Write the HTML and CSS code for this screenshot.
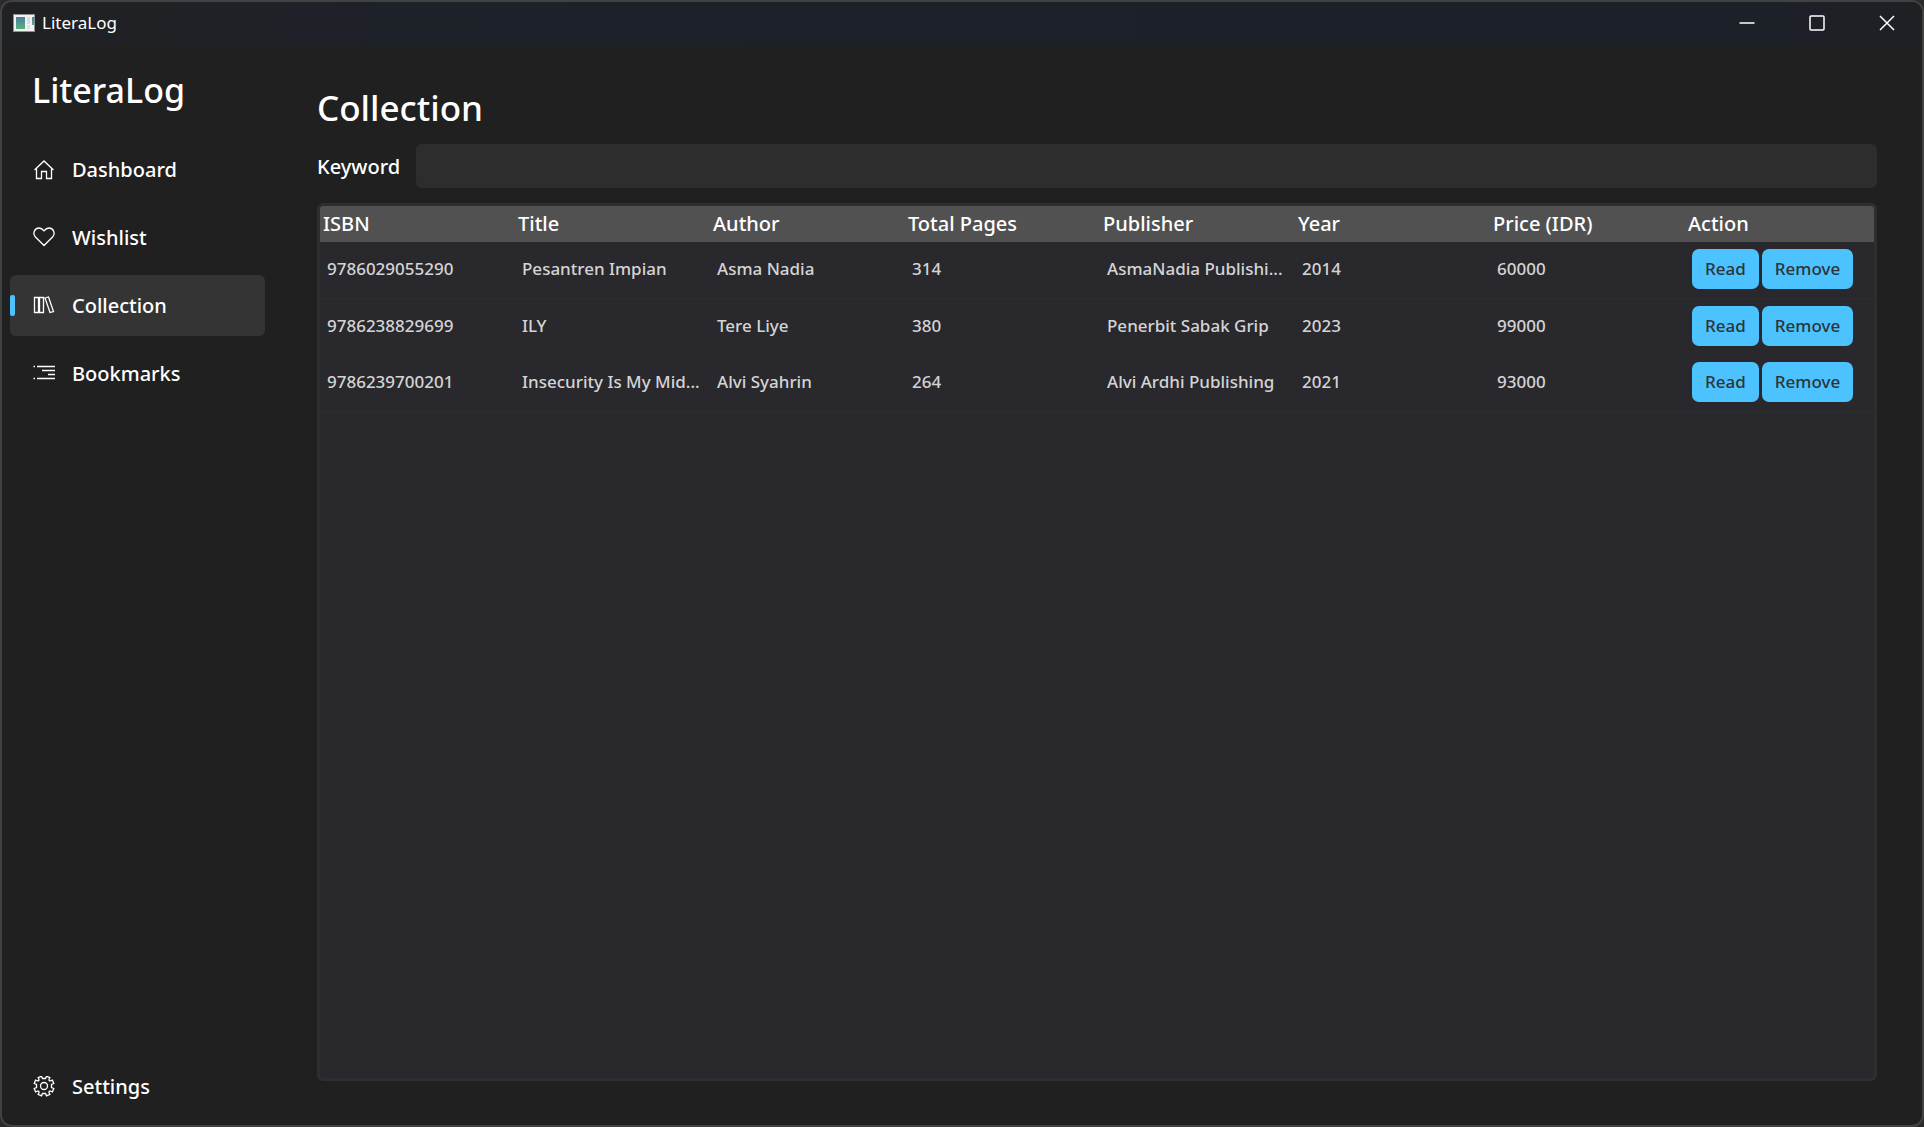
FILE: index.html
```html
<!DOCTYPE html>
<html lang="en">
<head>
<meta charset="utf-8">
<title>LiteraLog</title>
<link rel="stylesheet" href="styles.css">
</head>
<body>
<div class="window">
  <header class="titlebar">
    <svg class="app-icon" width="22" height="18" viewBox="0 0 22 18" aria-hidden="true">
      <defs><linearGradient id="pane" x1="0" y1="0" x2="0" y2="1"><stop offset="0" stop-color="#4a7f9e"/><stop offset="1" stop-color="#57b37c"/></linearGradient></defs>
      <rect width="22" height="18" fill="#8d9092"/>
      <rect x="1" y="1" width="20" height="16" fill="#f2f2f2"/>
      <rect x="3" y="3" width="9" height="12" fill="url(#pane)"/>
      <rect x="14" y="3" width="3" height="7" fill="#dcdcdc"/>
      <rect x="14" y="11" width="3" height="4" fill="#e4e4e4"/>
      <rect x="19" y="3" width="2" height="8" fill="url(#pane)"/>
    </svg>
    <span class="titlebar-text">LiteraLog</span>
    <div class="controls">
      <button class="control" type="button" aria-label="Minimize"><svg width="16" height="16" viewBox="0 0 16 16"><path d="M0.500 8H15.500"/></svg></button>
      <button class="control" type="button" aria-label="Maximize"><svg width="16" height="16" viewBox="0 0 16 16"><rect x="1" y="1" width="14" height="14" rx="1"/></svg></button>
      <button class="control" type="button" aria-label="Close"><svg width="16" height="16" viewBox="0 0 16 16"><path d="M1 1L15 15M15 1L1 15"/></svg></button>
    </div>
  </header>
  <div class="body">
    <aside class="sidebar">
      <div class="brand">LiteraLog</div>
      <nav class="nav">
        <a class="nav-item" href="#dashboard"><svg width="22" height="22" viewBox="0 0 22 22"><path d="M1.500 11L11 2L20.500 11M3.500 9.500V19.500H8.500V12.500H13.500V19.500H18.500V9.500"/></svg>Dashboard</a>
        <a class="nav-item" href="#wishlist"><svg width="22" height="22" viewBox="0 0 22 22"><path d="M11 18.500L2.200 9.700C-0.500 6.500 1.300 1 6 1C8.500 1 10 2.500 11 3.800C12 2.500 13.500 1 16 1C20.700 1 22.500 6.500 19.800 9.700Z"/></svg>Wishlist</a>
        <a class="nav-item active" href="#collection" aria-current="page"><svg width="22" height="22" viewBox="0 0 22 22"><path d="M1.500 2.500H5.500V17.500H1.500ZM6.500 2.500H10.500V17.500H6.500ZM12 3L15.500 2L20.500 16.500L17 17.500Z"/></svg>Collection</a>
        <a class="nav-item" href="#bookmarks"><svg width="22" height="22" viewBox="0 0 22 22"><path d="M0.500 3.500H2M4 3.500H22M9 7.500H22M15 11.500H22M0.500 15.500H2M4 15.500H22"/></svg>Bookmarks</a>
      </nav>
      <a class="nav-item settings" href="#settings"><svg width="22" height="22" viewBox="0 0 22 22"><circle cx="11" cy="10" r="3.500"/><path d="M8.500 0.200L9.500 2.500H12.500L13.500 0.200L16.800 1.600L15.900 4L17 5.100L19.400 4.200L20.800 7.500L18.500 8.500V11.500L20.800 12.500L19.400 15.800L17 14.900L15.900 16L16.800 18.400L13.500 19.800L12.500 17.500H9.500L8.500 19.800L5.200 18.400L6.100 16L5 14.900L2.600 15.800L1.200 12.500L3.500 11.500V8.500L1.200 7.500L2.600 4.200L5 5.100L6.100 4L5.200 1.600Z"/></svg>Settings</a>
    </aside>
    <main class="main">
      <h1 class="heading">Collection</h1>
      <div class="search">
        <label for="keyword">Keyword</label>
        <input id="keyword" class="search-input" type="text">
      </div>
      <div class="panel">
        <table class="books-table">
          <thead>
            <tr><th>ISBN</th><th>Title</th><th>Author</th><th>Total Pages</th><th>Publisher</th><th>Year</th><th>Price (IDR)</th><th>Action</th></tr>
          </thead>
          <tbody>
            <tr><td>9786029055290</td><td>Pesantren Impian</td><td>Asma Nadia</td><td>314</td><td>AsmaNadia Publishi...</td><td>2014</td><td>60000</td><td><div class="actions"><button class="btn" type="button">Read</button><button class="btn" type="button">Remove</button></div></td></tr>
            <tr><td>9786238829699</td><td>ILY</td><td>Tere Liye</td><td>380</td><td>Penerbit Sabak Grip</td><td>2023</td><td>99000</td><td><div class="actions"><button class="btn" type="button">Read</button><button class="btn" type="button">Remove</button></div></td></tr>
            <tr><td>9786239700201</td><td>Insecurity Is My Mid...</td><td>Alvi Syahrin</td><td>264</td><td>Alvi Ardhi Publishing</td><td>2021</td><td>93000</td><td><div class="actions"><button class="btn" type="button">Read</button><button class="btn" type="button">Remove</button></div></td></tr>
          </tbody>
        </table>
      </div>
    </main>
  </div>
</div>
</body>
</html>
```
FILE: styles.css
```css
* { box-sizing: border-box; }

body {
  margin: 0;
  background: #2b2b2b;
  color: #fff;
  font-family: "Noto Sans", "Open Sans", sans-serif;
  font-size: 20px;
  font-weight: 500;
}

button { font: inherit; border: 0; }

.window {
  display: flex;
  flex-direction: column;
  height: 100vh;
  border: 2px solid #424242;
  border-radius: 12px;
  background: #202020;
  overflow: hidden;
}

.titlebar {
  display: flex;
  align-items: center;
  height: 43px;
  padding: 0 0 2px 11px;
  background: linear-gradient(90deg, #202124, #1d2129 25%, #1c2028 90%, #1e2024);
}

.titlebar-text {
  margin-left: 7px;
  font-size: 17px;
  font-weight: 400;
}

.controls { display: flex; height: 100%; margin-left: auto; }

.control {
  display: flex;
  align-items: center;
  justify-content: center;
  width: 70px;
  padding: 0;
  background: none;
}

.control svg { fill: none; stroke: #fff; stroke-width: 1.5; }

.body { display: flex; flex: 1; min-height: 0; }

.sidebar {
  display: flex;
  flex-direction: column;
  width: 263px;
  padding: 17px 0 8px 8px;
}

.brand {
  padding-left: 22px;
  font-size: 34px;
  line-height: 56px;
}

.nav {
  display: flex;
  flex-direction: column;
  gap: 7px;
  margin-top: 21px;
}

.nav-item {
  display: flex;
  align-items: center;
  gap: 17px;
  height: 61px;
  padding-left: 23px;
  border-radius: 6px;
  color: #fff;
  text-decoration: none;
}

.nav-item svg { fill: none; stroke: #fff; stroke-width: 1.3; }

.nav-item.active {
  padding-left: 0;
  background: #343434;
}

.nav-item.active::before {
  content: "";
  width: 5px;
  height: 21px;
  margin-right: 1px;
  border-radius: 2px;
  background: #4cc2ff;
}

.settings { margin-top: auto; }

.main {
  display: flex;
  flex: 1;
  flex-direction: column;
  min-width: 0;
  padding: 33px 45px 44px 52px;
}

.heading {
  margin: 0;
  font-size: 35px;
  font-weight: 500;
  line-height: 60px;
}

.search { display: flex; align-items: center; gap: 16px; margin-top: 6px; }

.search-input {
  flex: 1;
  height: 44px;
  padding: 0 12px;
  border: 0;
  border-radius: 6px;
  background: #2d2d2d;
  color: #fff;
  font: inherit;
}

.panel {
  flex: 1;
  min-height: 0;
  margin-top: 15px;
  border: 3px solid #2e2e2e;
  border-radius: 6px;
  background: #29282d;
  overflow: hidden;
}

.books-table {
  width: calc(100% + 6px);
  border-spacing: 0;
  table-layout: fixed;
}

.books-table th {
  height: 36px;
  padding: 0 3px;
  background: #515151;
  font-weight: 500;
  line-height: 28px;
  text-align: left;
}

.books-table td {
  height: 56px;
  padding: 0 7px 3px;
  color: #d4d4d5;
  font-size: 17px;
  white-space: nowrap;
}

.books-table tr:nth-child(odd) td { height: 57px; border-bottom: 1px solid #2d2d31; }

.actions { display: flex; gap: 3px; }

.btn {
  height: 40px;
  padding: 0 13px;
  border-radius: 7px;
  background: #4cc2ff;
  color: #2d3438;
  font-size: 17px;
}
```
